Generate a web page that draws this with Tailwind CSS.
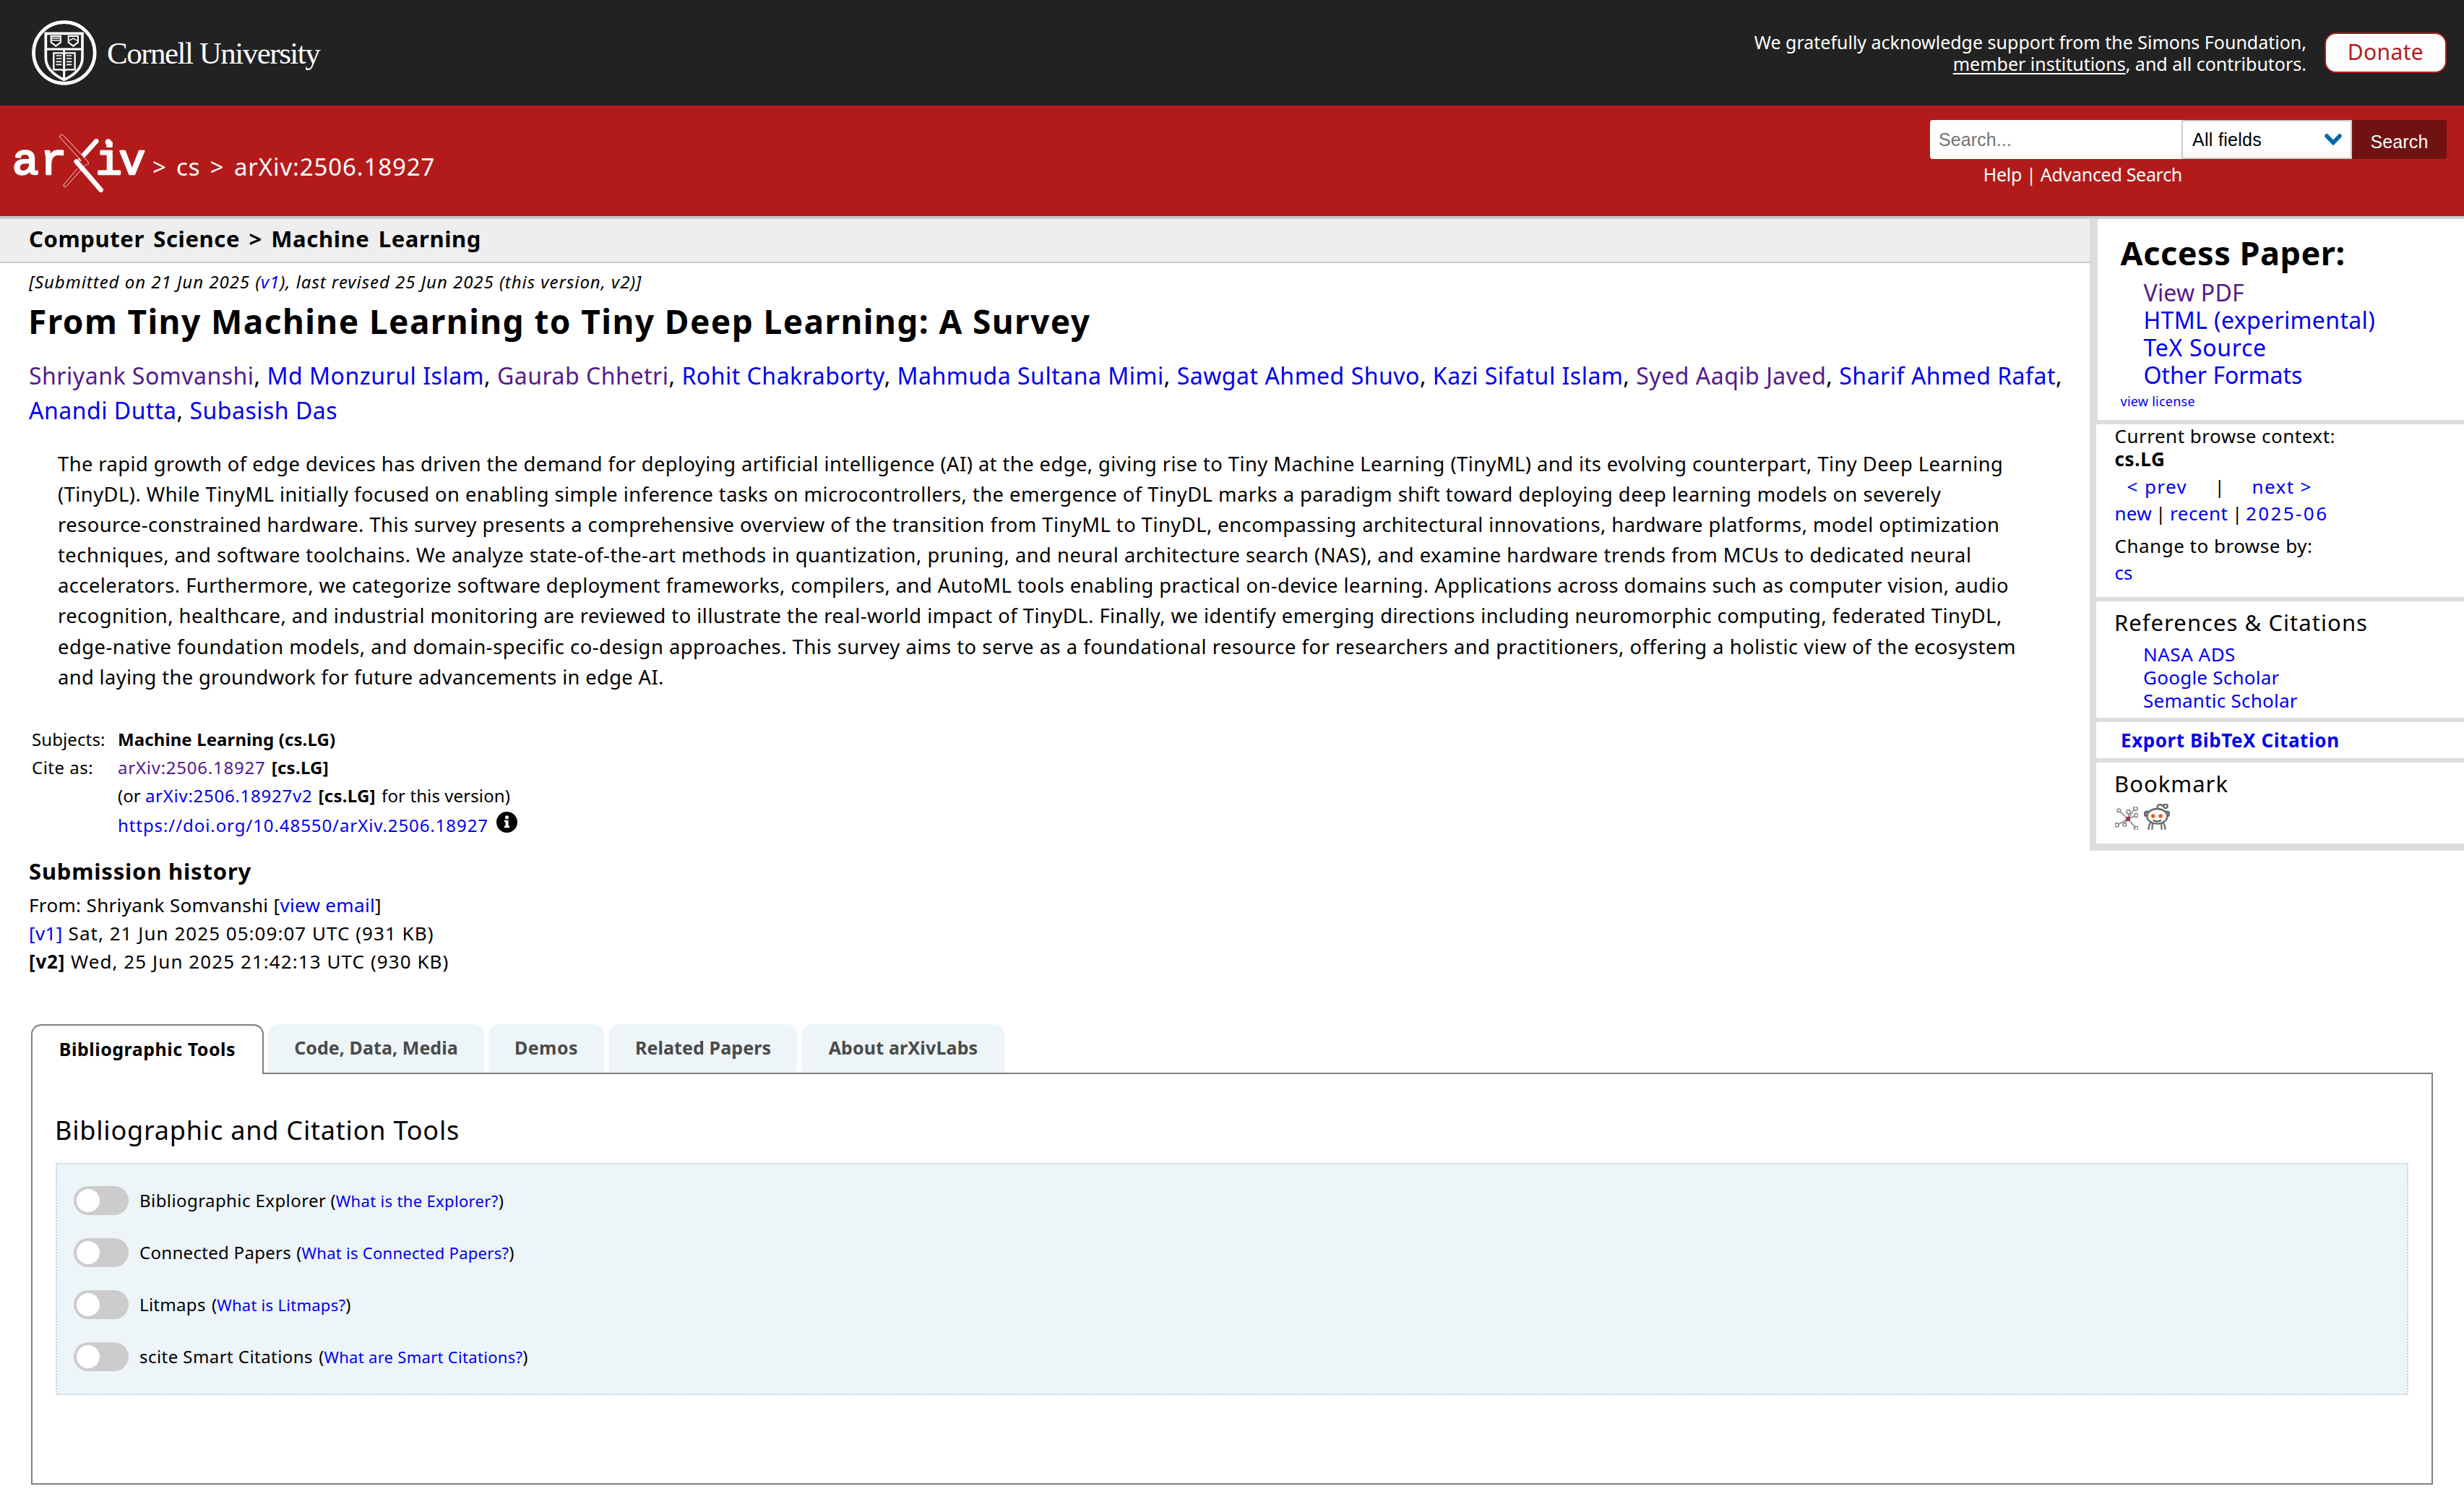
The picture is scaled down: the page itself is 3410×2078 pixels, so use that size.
<!DOCTYPE html>
<html lang="en">
<head>
<meta charset="utf-8">
<title>[2506.18927] From Tiny Machine Learning to Tiny Deep Learning: A Survey</title>
<script src="https://cdn.jsdelivr.net/npm/@tailwindcss/browser@4"></script>
</head>
<body class="w-[3410px] h-[2078px] overflow-hidden bg-white text-black whitespace-nowrap font-['Noto_Sans',sans-serif]">

<!-- University banner -->
<div class="h-[146px] bg-[#222] text-white flex items-center justify-between pl-[44px] pr-[24px]">
  <div class="flex items-center">
    <svg class="w-[90px] h-[90px] block" viewBox="132 24 270 270" fill="none" stroke="#fff">
      <circle cx="266.500" cy="159" r="127" stroke-width="14"/>
      <path d="M190 79H342V180C342 222 312 250 266 271C220 250 190 222 190 180Z" stroke-width="11"/>
      <path d="M190 144H342M266 144V271" stroke-width="9"/>
      <path d="M212 90H252V116L232 131L212 116ZM284 90H324V116L304 131L284 116Z" stroke-width="6"/>
      <path d="M212 98H252M212 107H252M288 108L304 99L320 108" stroke-width="4.500"/>
      <path d="M266 164L256 160H223V229H256L266 234L276 229H311V160H276Z" stroke-width="7"/>
      <path d="M233 171H256M233 183H256M233 196H256M233 208H256M276 171H298M276 183H298M276 196H298M276 208H298" stroke-width="5"/>
    </svg>
    <div class="ml-[14px] pt-[2px] font-['Liberation_Serif',serif] text-[43px] leading-[60px] tracking-[-1.5px]">Cornell University</div>
  </div>
  <div class="flex items-center">
    <div class="text-right text-[25px] leading-[30px] mr-[25px]">We gratefully acknowledge support from the Simons Foundation,<br><a class="underline underline-offset-[3px] decoration-2">member institutions</a>, and all contributors.</div>
    <a class="box-border w-[169px] h-[56px] border-2 border-[#b31b1b] rounded-[16px] bg-white text-[#b31b1b] text-center text-[30px] leading-[50px] tracking-[0.35px]">Donate</a>
  </div>
</div>

<!-- Site header -->
<div class="h-[157px] bg-[#b31b1b] border-b-4 border-[#ccc] text-white flex justify-between items-start pl-[15px] pr-[24px]">
  <div class="flex items-start">
    <svg class="block mt-[34px] w-[190px] h-[93px]" viewBox="45 480 570 280">
      <g font-family="Liberation Mono" font-size="184" fill="#fff" stroke="#fff" stroke-width="8" stroke-linejoin="round">
        <text y="663"><tspan x="50">a</tspan><tspan x="167">r</tspan><tspan x="397">i</tspan><tspan x="494">v</tspan></text>
      </g>
      <circle cx="450" cy="530" r="13" fill="#fff"/>
      <path d="M362 618L275 714Q269 720 265 715Q262 711 267 704L322 640" fill="none" stroke="#fff" stroke-width="2.500"/>
      <path d="M400 526L335 598" stroke="#fff" stroke-width="20" stroke-linecap="round"/>
      <path d="M336 606L249 511Q245 502 252 499Q258 497 264 503L364 610Q371 618 364 626" fill="#b31b1b" stroke="#fff" stroke-width="2.500"/>
      <path d="M317 611L419 729" stroke="#fff" stroke-width="20" stroke-linecap="round"/>
    </svg>
    <div class="mt-[60px] ml-[6px] text-[33px] leading-[50px] tracking-[0.87px] [word-spacing:3.9px]">&gt; cs &gt; arXiv:2506.18927</div>
  </div>
  <div class="mt-[20px] w-[715px]">
    <div class="flex h-[54px] font-['Liberation_Sans',sans-serif] text-[25px] leading-[54px]">
      <div class="w-[348px] bg-white rounded-l-[4px] pl-[12px] text-[#757575] tracking-[0.11px]">Search...</div>
      <div class="w-[236px] bg-white border-2 border-[#ccc] pl-[13px] pr-[12px] flex items-center justify-between text-black tracking-[0.3px] leading-[50px]">All fields
        <svg class="w-[24px] h-[16px]" viewBox="0 0 24 16" fill="none" stroke="#0068ac" stroke-width="5.500" stroke-linecap="round"><path d="M3 3L12 12.500L21 3"/></svg>
      </div>
      <div class="w-[131px] bg-[#701112] rounded-r-[4px] text-center pt-[5px] tracking-[0.14px] leading-[50px]">Search</div>
    </div>
    <div class="w-[349px] text-right mt-[3px] text-[25px] leading-[36px] tracking-[-0.3px]"><a>Help</a> | <a>Advanced Search</a></div>
  </div>
</div>

<div class="flex h-[1114px] items-start">
  <!-- Article -->
  <div class="w-[2892px]">
    <div class="h-[61px] bg-[#eee] border-b-2 border-[#ccc] pl-[40px] font-bold text-[31px] leading-[54px] tracking-[0.6px] [word-spacing:3.8px]">Computer Science &gt; Machine Learning</div>
    <div class="pl-[40px]">
      <div class="mt-[8px] italic text-[24px] leading-[36px] tracking-[0.96px]">[Submitted on 21 Jun 2025 (<a class="text-[#00e]">v1</a>), last revised 25 Jun 2025 (this version, v2)]</div>
      <h1 class="mt-[6px] -ml-px font-bold text-[46px] leading-[60px] tracking-[1.41px]">From Tiny Machine Learning to Tiny Deep Learning: A Survey</h1>
      <div class="mt-[22px] text-[32px] leading-[48px] tracking-[0.508px] [&_a]:text-[#00e]"><a class="text-[#551a8b]!">Shriyank Somvanshi</a>, <a>Md Monzurul Islam</a>, <a class="text-[#551a8b]!">Gaurab Chhetri</a>, <a>Rohit Chakraborty</a>, <a>Mahmuda Sultana Mimi</a>, <a>Sawgat Ahmed Shuvo</a>, <a>Kazi Sifatul Islam</a>, <a class="text-[#551a8b]!">Syed Aaqib Javed</a>, <a>Sharif Ahmed Rafat</a>,<br><a>Anandi Dutta</a>, <a>Subasish Das</a></div>
      <div class="mt-[29px] pl-[40px] text-[27.3px] leading-[42.1px]">
        <div class="tracking-[0.458px]">The rapid growth of edge devices has driven the demand for deploying artificial intelligence (AI) at the edge, giving rise to Tiny Machine Learning (TinyML) and its evolving counterpart, Tiny Deep Learning</div>
        <div class="tracking-[0.477px]">(TinyDL). While TinyML initially focused on enabling simple inference tasks on microcontrollers, the emergence of TinyDL marks a paradigm shift toward deploying deep learning models on severely</div>
        <div class="tracking-[0.489px]">resource-constrained hardware. This survey presents a comprehensive overview of the transition from TinyML to TinyDL, encompassing architectural innovations, hardware platforms, model optimization</div>
        <div class="tracking-[0.511px]">techniques, and software toolchains. We analyze state-of-the-art methods in quantization, pruning, and neural architecture search (NAS), and examine hardware trends from MCUs to dedicated neural</div>
        <div class="tracking-[0.473px]">accelerators. Furthermore, we categorize software deployment frameworks, compilers, and AutoML tools enabling practical on-device learning. Applications across domains such as computer vision, audio</div>
        <div class="tracking-[0.494px]">recognition, healthcare, and industrial monitoring are reviewed to illustrate the real-world impact of TinyDL. Finally, we identify emerging directions including neuromorphic computing, federated TinyDL,</div>
        <div class="tracking-[0.542px]">edge-native foundation models, and domain-specific co-design approaches. This survey aims to serve as a foundational resource for researchers and practitioners, offering a holistic view of the ecosystem</div>
        <div class="tracking-[0.368px]">and laying the groundwork for future advancements in edge AI.</div>
      </div>
      <div class="mt-[45px] ml-[4px] grid grid-cols-[119px_1fr] text-[24px] leading-[39px]">
        <div class="tracking-[0.1px]">Subjects:</div><div class="font-bold tracking-[0.1px]">Machine Learning (cs.LG)</div>
        <div class="tracking-[0.5px]">Cite as:</div><div><a class="text-[#551a8b] tracking-[0.766px]">arXiv:2506.18927</a> <span class="ml-[2px] font-bold tracking-[0.26px]">[cs.LG]</span></div>
        <div></div><div>(or <a class="text-[#00e] tracking-[0.74px]">arXiv:2506.18927v2</a> <span class="ml-[2px] font-bold tracking-[0.26px]">[cs.LG]</span> <span class="tracking-[0.1px] ml-[2px]">for this version)</span></div>
        <div></div><div class="mt-[2px] flex items-start"><a class="text-[#00e] tracking-[0.92px]">https://doi.org/10.48550/arXiv.2506.18927</a>
          <svg class="ml-[11px] mt-px w-[29px] h-[29px]" viewBox="0 0 29 29"><circle cx="14.500" cy="14.500" r="14.500"/><circle cx="14.500" cy="7.800" r="2.500" fill="#fff"/><path d="M11 11.800H16.500V19.500H18V22.200H11V19.500H12.600V14.400H11Z" fill="#fff"/></svg>
        </div>
      </div>
      <h2 class="mt-[24.5px] font-bold text-[31px] leading-[40px] tracking-[0.8px]">Submission history</h2>
      <div class="mt-[7.500px] text-[26px] leading-[39px]">
        <div class="tracking-[0.34px]">From: Shriyank Somvanshi [<a class="text-[#00e]">view email</a>]</div>
        <div class="tracking-[1.03px]"><a class="text-[#00e] tracking-[0.4px]">[v1]</a> Sat, 21 Jun 2025 05:09:07 UTC (931 KB)</div>
        <div class="tracking-[1.07px]"><b class="tracking-[0.8px]">[v2]</b> Wed, 25 Jun 2025 21:42:13 UTC (930 KB)</div>
      </div>
    </div>
  </div>

  <!-- Sidebar -->
  <div class="w-[518px] h-[874px] border-l-[9px] border-b-[10px] border-[#ddd] [&_a]:text-[#00e]">
    <div class="h-[284px] border-l-2 border-b-[6px] border-[#ddd] pl-[31.5px] pt-[16.5px]">
      <h2 class="font-bold text-[45px] leading-[60px] tracking-[0.53px]">Access Paper:</h2>
      <div class="mt-[6px] pl-[32px] text-[32px] leading-[38px]">
        <div><a class="text-[#551a8b]! tracking-[0.2px]">View PDF</a></div>
        <div><a class="tracking-[0.36px]">HTML (experimental)</a></div>
        <div><a class="tracking-[0.7px]">TeX Source</a></div>
        <div><a class="tracking-[0px]">Other Formats</a></div>
      </div>
      <div class="mt-[5.500px] text-[18px] leading-[24px] tracking-[0.25px]"><a>view license</a></div>
    </div>
    <div class="h-[245px] border-b-[6px] border-[#ddd] pl-[25.5px] text-[26px] leading-[32px]">
      <div class="tracking-[0.5px]">Current browse context:</div>
      <div class="font-bold tracking-[0.7px]">cs.LG</div>
      <div class="mt-[6px] pl-[17px] grid grid-cols-[121px_52px_auto] tracking-[1.4px]"><a>&lt; prev</a><span>|</span><a>next &gt;</a></div>
      <div class="mt-[5px] grid grid-cols-[56.5px_20px_86px_19px_auto]"><a class="tracking-[0.3px]">new</a><span>|</span><a class="tracking-[0.5px]">recent</a><span>|</span><a class="tracking-[2.4px]">2025-06</a></div>
      <div class="mt-[13px] tracking-[0.5px]">Change to browse by:</div>
      <div class="mt-[5px]"><a>cs</a></div>
    </div>
    <div class="h-[167px] border-b-[6px] border-[#ddd] pl-[25px] pt-[8.500px]">
      <h3 class="text-[31px] leading-[40px] tracking-[1.05px]">References &amp; Citations</h3>
      <div class="mt-[8px] pl-[40px] text-[26px] leading-[32px] tracking-[0.25px]"><a class="block tracking-[0.5px]">NASA ADS</a><a class="block">Google Scholar</a><a class="block">Semantic Scholar</a></div>
    </div>
    <div class="h-[56px] border-b-[6px] border-[#ddd] pl-[34px] pt-[9px] font-bold text-[26px] leading-[32px] tracking-[0.58px]"><a>Export BibTeX Citation</a></div>
    <div class="pl-[25px] pt-[9px]">
      <div class="text-[31px] leading-[40px] tracking-[1px]">Bookmark</div>
      <div class="mt-[8px] pl-px flex items-end">
        <svg class="w-[32px] h-[32px]" viewBox="0 0 96 96" fill="none" stroke="#8c8c8c" stroke-width="5">
          <path d="M54 51L20 20M54 51L57 28M54 51L80 10M54 51L82 38M54 51L12 74M54 51L42 70M54 51L86 88"/>
          <circle cx="16" cy="16" r="7"/><circle cx="56" cy="22" r="8"/><circle cx="85" cy="8" r="8"/><circle cx="88" cy="36" r="8"/><circle cx="8" cy="76" r="8"/><circle cx="40" cy="74" r="7"/><circle cx="88" cy="90" r="8"/>
          <rect x="47" y="44" width="15" height="15" fill="#b0205f" stroke="#8a3a60" stroke-width="2"/>
        </svg>
        <svg class="ml-[8px] w-[36px] h-[36px]" viewBox="0 0 108 108" fill="none" stroke="#666" stroke-width="7">
          <path d="M55 24Q55 4 64 3Q72 3 80 9"/><circle cx="90" cy="10" r="8"/>
          <circle cx="12" cy="42" r="10" fill="#999"/><circle cx="96" cy="42" r="10" fill="#999"/>
          <path d="M28 78Q18 92 20 108M80 78Q90 92 88 108M36 82L34 108M72 82L74 108" stroke="#777"/>
          <ellipse cx="55" cy="52" rx="42" ry="31" fill="#fff"/>
          <path d="M38 68Q55 78 72 68"/>
          <circle cx="38" cy="51" r="8" fill="#ff4500" stroke="#ff9a70" stroke-width="2"/><circle cx="69" cy="51" r="8" fill="#ff4500" stroke="#ff9a70" stroke-width="2"/>
        </svg>
      </div>
    </div>
  </div>
</div>

<!-- Labs tabs -->
<div class="px-[43px]">
  <div class="flex items-start h-[67px] font-bold text-[25px] leading-[64px] text-[#4a4a4a] text-center">
    <div class="relative z-10 w-[322px] h-[69px] border-2 border-b-0 border-[#808080] rounded-t-[14px] bg-white text-black tracking-[0.5px]">Bibliographic Tools</div>
    <div class="ml-[6px] w-[299px] h-[67px] rounded-t-[14px] bg-[#edf5f8] tracking-[0.07px]">Code, Data, Media</div>
    <div class="ml-[6px] w-[160px] h-[67px] rounded-t-[14px] bg-[#edf5f8] tracking-[0.44px]">Demos</div>
    <div class="ml-[7px] w-[260px] h-[67px] rounded-t-[14px] bg-[#edf5f8] tracking-[0.1px]">Related Papers</div>
    <div class="ml-[7px] w-[280px] h-[67px] rounded-t-[14px] bg-[#edf5f8] tracking-[0.16px]">About arXivLabs</div>
  </div>
  <div class="h-[570px] border-2 border-[#808080] px-[32px] pt-[53px]">
    <h2 class="-ml-px text-[36px] leading-[50px] tracking-[0.8px]">Bibliographic and Citation Tools</h2>
    <div class="mt-[20px] h-[321px] bg-[#edf5f8] border-2 border-dotted border-[#c1d0de] pl-[23px] pt-[30px] flex flex-col gap-[32px] text-[24px] leading-[40px] [&_a]:text-[22px] [&_a]:text-[#00e]">
      <div class="flex items-center"><span class="w-[76px] h-[40px] rounded-full bg-[#ccc] p-[4px] mr-[15px]"><span class="block size-[32px] rounded-full bg-white"></span></span><div><span class="tracking-[0.42px]">Bibliographic Explorer</span> (<a class="tracking-[0.34px]">What is the Explorer?</a>)</div></div>
      <div class="flex items-center"><span class="w-[76px] h-[40px] rounded-full bg-[#ccc] p-[4px] mr-[15px]"><span class="block size-[32px] rounded-full bg-white"></span></span><div><span class="mr-px tracking-[0.3px]">Connected Papers</span> (<a class="tracking-[0.28px]">What is Connected Papers?</a>)</div></div>
      <div class="flex items-center"><span class="w-[76px] h-[40px] rounded-full bg-[#ccc] p-[4px] mr-[15px]"><span class="block size-[32px] rounded-full bg-white"></span></span><div><span class="mr-[2px] tracking-[0.3px]">Litmaps</span> (<a class="tracking-[0.28px]">What is Litmaps?</a>)</div></div>
      <div class="flex items-center"><span class="w-[76px] h-[40px] rounded-full bg-[#ccc] p-[4px] mr-[15px]"><span class="block size-[32px] rounded-full bg-white"></span></span><div><span class="mr-[2px] tracking-[0.44px]">scite Smart Citations</span> (<a class="tracking-[0.3px]">What are Smart Citations?</a>)</div></div>
    </div>
  </div>
</div>
</body>
</html>
